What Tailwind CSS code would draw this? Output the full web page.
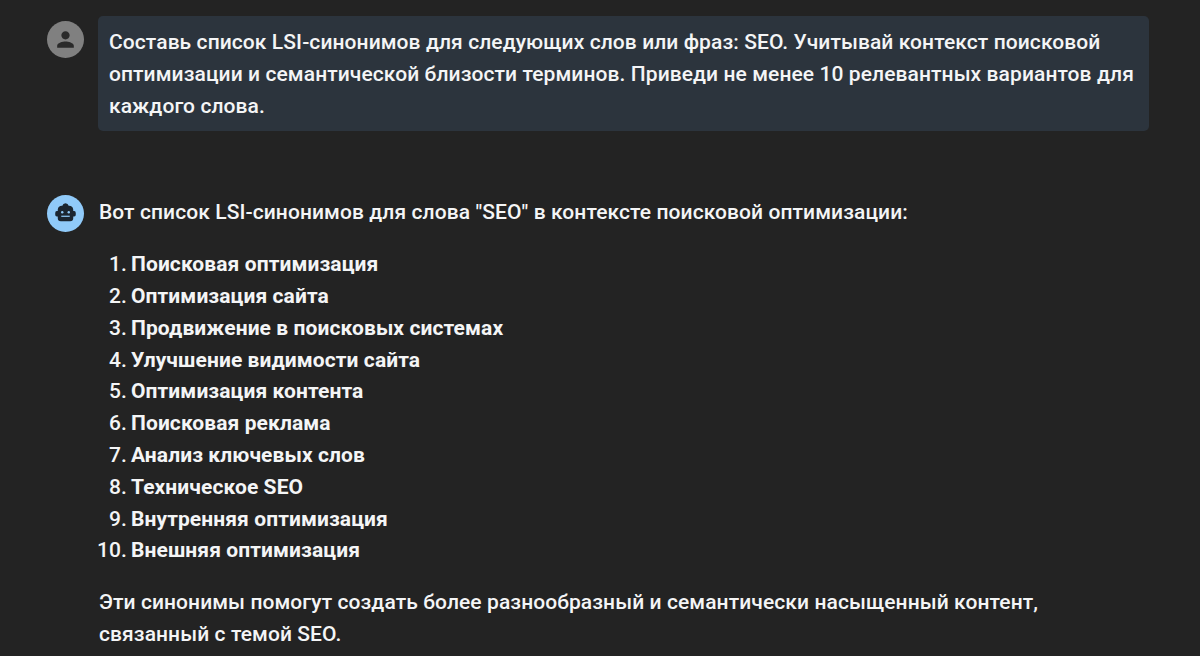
<!DOCTYPE html>
<html lang="ru">
<head>
  <meta charset="UTF-8" />
  <title>LSI</title>
  <script src="https://cdn.jsdelivr.net/npm/@tailwindcss/browser@4"></script>
</head>
<body class="bg-[#232323] h-[656px] w-[1200px] overflow-hidden text-[#f4f5f6] font-['Roboto',sans-serif] text-[21px] leading-[31.8px] font-medium tracking-[0.09px]">
  <main class="pl-[47px] pr-[51px] pt-4">
    <!-- user message -->
    <section class="flex">
      <div class="w-[37px] h-[37px] mt-[5px] shrink-0 rounded-full bg-[#808080] flex items-center justify-center">
        <svg class="w-[25px] h-[25px]" viewBox="0 0 24 24" fill="#2a2a2a"><path d="M12 12c2.210 0 4-1.790 4-4s-1.790-4-4-4-4 1.790-4 4 1.790 4 4 4zm0 2c-2.670 0-8 1.340-8 4v2h16v-2c0-2.660-5.330-4-8-4z"/></svg>
      </div>
      <div class="ml-[14px] flex-1 bg-[#2c343d] rounded-[5px] px-[11px] pt-[11px] pb-[9px]">
        Составь список LSI-синонимов для следующих слов или фраз: SEO. Учитывай контекст поисковой оптимизации и семантической близости терминов. Приведи не менее 10 релевантных вариантов для каждого слова.
      </div>
    </section>

    <!-- assistant message -->
    <section class="flex mt-[64px]">
      <div class="w-[37px] h-[37px] shrink-0 rounded-full bg-[#90caf9] flex items-center justify-center">
        <svg class="w-[29px] h-[29px]" viewBox="0 0 24 24" fill="#1b2530"><path d="M12 3.500a2.700 2.700 0 0 0-2.600 2.100H9a3.500 3.500 0 0 0-3.400 3v1.400H4.800a1.500 1.500 0 0 0-1.300 1.500v1.500a1.500 1.500 0 0 0 1.300 1.500h.8V16a2.500 2.500 0 0 0 2.500 2.500h7.800a2.500 2.500 0 0 0 2.500-2.500v-1.500h.8a1.500 1.500 0 0 0 1.300-1.500V11.500a1.500 1.500 0 0 0-1.300-1.500h-.8V8.600a3.500 3.500 0 0 0-3.400-3h-.4A2.700 2.700 0 0 0 12 3.500z"/><circle cx="9.300" cy="11" r="1" fill="#90caf9"/><circle cx="14.700" cy="11" r="1" fill="#90caf9"/><rect x="8.500" y="13.800" width="7" height="1" fill="#90caf9"/></svg>
      </div>
      <div class="ml-[15px] flex-1">
        <p class="mt-[2px]">Вот список LSI-синонимов для слова "SEO" в контексте поисковой оптимизации:</p>
        <ol class="mt-[20px] font-bold">
          <li class="flex"><span class="w-[36px] -ml-[4px] pr-[4px] text-right font-medium">1.</span><span>Поисковая оптимизация</span></li>
          <li class="flex"><span class="w-[36px] -ml-[4px] pr-[4px] text-right font-medium">2.</span><span>Оптимизация сайта</span></li>
          <li class="flex"><span class="w-[36px] -ml-[4px] pr-[4px] text-right font-medium">3.</span><span>Продвижение в поисковых системах</span></li>
          <li class="flex"><span class="w-[36px] -ml-[4px] pr-[4px] text-right font-medium">4.</span><span>Улучшение видимости сайта</span></li>
          <li class="flex"><span class="w-[36px] -ml-[4px] pr-[4px] text-right font-medium">5.</span><span>Оптимизация контента</span></li>
          <li class="flex"><span class="w-[36px] -ml-[4px] pr-[4px] text-right font-medium">6.</span><span>Поисковая реклама</span></li>
          <li class="flex"><span class="w-[36px] -ml-[4px] pr-[4px] text-right font-medium">7.</span><span>Анализ ключевых слов</span></li>
          <li class="flex"><span class="w-[36px] -ml-[4px] pr-[4px] text-right font-medium">8.</span><span>Техническое SEO</span></li>
          <li class="flex"><span class="w-[36px] -ml-[4px] pr-[4px] text-right font-medium">9.</span><span>Внутренняя оптимизация</span></li>
          <li class="flex"><span class="w-[36px] -ml-[4px] pr-[4px] text-right font-medium">10.</span><span>Внешняя оптимизация</span></li>
        </ol>
        <p class="mt-[20px]">Эти синонимы помогут создать более разнообразный и семантически насыщенный контент, связанный с темой SEO.</p>
      </div>
    </section>
  </main>
</body>
</html>
